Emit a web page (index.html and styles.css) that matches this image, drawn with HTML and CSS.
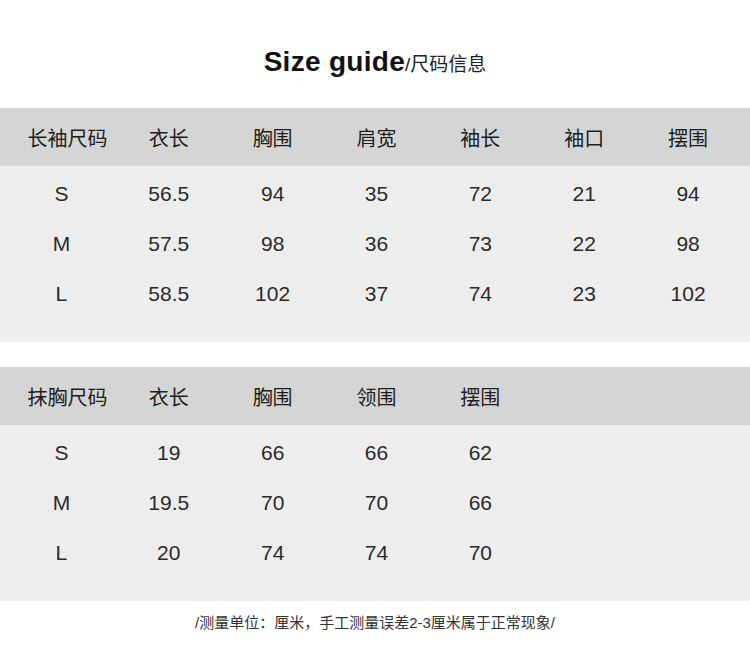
FILE: index.html
```html
<!DOCTYPE html>
<html lang="zh">
<head>
<meta charset="utf-8">
<link rel="stylesheet" href="styles.css">
</head>
<body>
<div class="page">
  <h1 class="title"><span class="en">Size guide</span><span class="cn">/尺码信息</span></h1>

  <section class="table">
    <div class="row head">
      <div class="first">长袖尺码</div><div>衣长</div><div>胸围</div><div>肩宽</div><div>袖长</div><div>袖口</div><div>摆围</div>
    </div>
    <div class="body">
      <div class="row"><div class="size">S</div><div>56.5</div><div>94</div><div>35</div><div>72</div><div>21</div><div>94</div></div>
      <div class="row"><div class="size">M</div><div>57.5</div><div>98</div><div>36</div><div>73</div><div>22</div><div>98</div></div>
      <div class="row"><div class="size">L</div><div>58.5</div><div>102</div><div>37</div><div>74</div><div>23</div><div>102</div></div>
    </div>
  </section>

  <section class="table second">
    <div class="row head">
      <div class="first">抹胸尺码</div><div>衣长</div><div>胸围</div><div>领围</div><div>摆围</div>
    </div>
    <div class="body">
      <div class="row"><div class="size">S</div><div>19</div><div>66</div><div>66</div><div>62</div></div>
      <div class="row"><div class="size">M</div><div>19.5</div><div>70</div><div>70</div><div>66</div></div>
      <div class="row"><div class="size">L</div><div>20</div><div>74</div><div>74</div><div>70</div></div>
    </div>
  </section>

  <p class="note">/测量单位：厘米，手工测量误差2-3厘米属于正常现象/</p>
</div>
</body>
</html>
```

FILE: styles.css
```css
html, body {
  margin: 0;
  padding: 0;
  background: #ffffff;
}

.page {
  width: 750px;
  font-family: "Liberation Sans", "Noto Sans CJK SC", sans-serif;
  color: #222;
}

.title {
  margin: 0;
  padding-top: 42px;
  box-sizing: border-box;
  height: 108px;
  display: flex;
  justify-content: center;
  align-items: baseline;
  line-height: 40px;
  font-weight: normal;
}

.title .en {
  font-family: "Liberation Sans", sans-serif;
  font-weight: bold;
  font-size: 28px;
  letter-spacing: 0.3px;
  color: #111;
}

.title .cn {
  font-family: "Liberation Sans", "Noto Sans CJK SC", sans-serif;
  font-size: 19px;
  color: #222;
}

.table {
  display: flex;
  flex-direction: column;
}

.second {
  margin-top: 25px;
}

.row {
  display: grid;
  grid-template-columns: repeat(7, 1fr);
  padding: 0 10px 0 13px;
  align-items: center;
  text-align: center;
  height: 50px;
  font-size: 21px;
  color: #2a2a2a;
}

.row .size {
  padding-right: 7px;
}

.row.head {
  height: 58px;
  background: #d5d5d5;
  font-family: "Noto Sans CJK SC", sans-serif;
  font-size: 20px;
  color: #1e1e1e;
}

.row.head .first {
  padding-left: 5px;
}

.body {
  background: #ededed;
  padding: 3px 0 23px;
}

.note {
  margin: 0;
  padding-top: 12px;
  text-align: center;
  font-family: "Liberation Sans", "Noto Sans CJK SC", sans-serif;
  font-size: 15px;
  line-height: 20px;
  color: #333;
}
```
